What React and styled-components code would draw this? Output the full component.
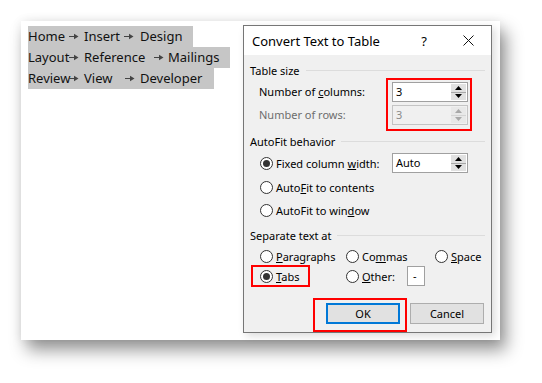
import React from "react";
import styled, { createGlobalStyle } from "styled-components";

const Global = createGlobalStyle`
  html, body { margin: 0; padding: 0; background: #ffffff; }
  body { width: 542px; height: 383px; overflow: hidden; font-family: "Noto Sans", "Open Sans", sans-serif; }
`;

const Page = styled.div`
  padding: 21px;
`;

const Card = styled.div`
  width: 479px;
  height: 319px;
  box-sizing: border-box;
  background: #ffffff;
  box-shadow: 6px 10px 16px rgba(0, 0, 0, 0.42), 0 0 10px rgba(0, 0, 0, 0.07);
  display: flex;
  justify-content: space-between;
  align-items: flex-start;
  padding: 4px 8px 0 7px;
`;

const TextBlock = styled.div`
  margin-top: 1px;
  display: flex;
  flex-direction: column;
  align-items: flex-start;
  font-family: "Noto Sans", sans-serif;
  font-size: 13px;
  color: #111;
`;

const Line = styled.div`
  display: flex;
  height: 21px;
  line-height: 21px;
  background: #c6c6c6;
`;

const Cell = styled.span`
  width: ${(p) => p.$w}px;
  white-space: nowrap;
  flex: none;
`;

const Arrow = styled.span`
  width: ${(p) => p.$w}px;
  flex: none;
  display: flex;
  align-items: center;
  padding-left: ${(p) => p.$pad || 0}px;
  box-sizing: border-box;
`;

const Dialog = styled.div`
  width: 249px;
  height: 308px;
  box-sizing: border-box;
  border: 1px solid #767676;
  background: #f0f0f0;
  box-shadow: 3px 3px 8px rgba(0, 0, 0, 0.14);
  display: flex;
  flex-direction: column;
  font-family: "Noto Sans", sans-serif;
  font-size: 11px;
  color: #000;
`;

const TitleBar = styled.div`
  height: 29px;
  background: #ffffff;
  display: flex;
  align-items: center;
  padding: 0 0 0 8px;
`;

const Title = styled.div`
  flex: 1;
  font-size: 13px;
  color: #000;
`;

const Help = styled.div`
  width: 14px;
  font-size: 13px;
  margin-right: 31px;
  text-align: center;
`;

const Close = styled.div`
  width: 12px;
  height: 12px;
  margin-right: 17px;
  display: flex;
  align-items: center;
  justify-content: center;
`;

const Body = styled.div`
  padding: 0 6px;
  display: flex;
  flex-direction: column;
`;

const Header = styled.div`
  height: 16px;
  margin-top: ${(p) => p.$mt}px;
  display: flex;
  align-items: center;
  gap: 6px;
  &::after {
    content: "";
    flex: 1;
    height: 1px;
    background: #dcdcdc;
  }
`;

const SizeGrid = styled.div`
  display: grid;
  grid-template-columns: 1fr 86px;
  margin-right: 13px;
`;

const SizeLabels = styled.div`
  display: flex;
  flex-direction: column;
  padding: 4px 0 0 9px;
  gap: 3px;
`;

const SizeLabel = styled.div`
  height: 20px;
  line-height: 20px;
  color: ${(p) => (p.$disabled ? "#6d6d6d" : "#000")};
`;

const RedBox = styled.div`
  border: 2px solid #ff0000;
  box-sizing: border-box;
`;

const InputStack = styled(RedBox)`
  display: flex;
  flex-direction: column;
  gap: 3px;
  padding: 2px 2px 4px 4px;
`;

const SpinInput = styled.div`
  width: 76px;
  height: 20px;
  box-sizing: border-box;
  border: 1px solid ${(p) => (p.$disabled ? "#c4c4c4" : "#a0a0a0")};
  background: ${(p) => (p.$disabled ? "#f0f0f0" : "#ffffff")};
  color: ${(p) => (p.$disabled ? "#8a8a8a" : "#000")};
  display: flex;
  align-items: stretch;
  margin-right: ${(p) => p.$mr || 0}px;
`;

const Value = styled.div`
  flex: 1;
  padding-left: 3px;
  line-height: 18px;
`;

const Spin = styled.div`
  width: 15px;
  margin: 1px 1px 1px 0;
  display: flex;
  flex-direction: column;
  gap: 1px;
  background: ${(p) => (p.$disabled ? "#d4d4d4" : "#a8a8a8")};
`;

const SpinBtn = styled.div`
  flex: 1;
  background: ${(p) => (p.$disabled ? "#e8e8e8" : "#e1e1e1")};
  display: flex;
  align-items: center;
  justify-content: center;
`;

const Row = styled.div`
  height: ${(p) => p.$h || 20}px;
  margin-top: ${(p) => p.$mt || 0}px;
  display: flex;
  align-items: center;
  padding-left: 10px;
`;

const RadioItem = styled.div`
  display: flex;
  align-items: center;
  gap: 3px;
  flex: ${(p) => (p.$grow ? 1 : "none")};
`;

const Circle = styled.span`
  width: 13px;
  height: 13px;
  box-sizing: border-box;
  border-radius: 50%;
  border: 1px solid #333;
  background: #fff;
  display: flex;
  align-items: center;
  justify-content: center;
  flex: none;
  &::after {
    content: "";
    width: 7px;
    height: 7px;
    border-radius: 50%;
    background: ${(p) => (p.$on ? "#333" : "transparent")};
  }
`;

const SepGrid = styled.div`
  display: grid;
  grid-template-columns: 86px 89px 1fr;
  grid-template-rows: 18px 22px;
  margin-top: 4px;
  padding-left: 1px;
`;

const SepCell = styled.div`
  display: flex;
  align-items: center;
  padding-left: 9px;
`;

const TabsBox = styled(RedBox)`
  width: 59px;
  height: 22px;
  display: flex;
  align-items: center;
  padding-left: 7px;
`;

const OtherInput = styled.div`
  width: 18px;
  height: 20px;
  box-sizing: border-box;
  border: 1px solid #a0a0a0;
  background: #fff;
  margin-left: 12px;
  padding-left: 5px;
  line-height: 18px;
`;

const ButtonRow = styled.div`
  margin-top: 11px;
  display: flex;
  justify-content: flex-end;
  align-items: flex-start;
  margin-right: 1px;
`;

const OkBox = styled(RedBox)`
  padding: 3px 5px 6px 11px;
`;

const Button = styled.div`
  width: 74px;
  height: 21px;
  box-sizing: border-box;
  border: ${(p) => (p.$primary ? "2px solid #0078d7" : "1px solid #adadad")};
  background: #e1e1e1;
  display: flex;
  align-items: center;
  justify-content: center;
  margin-top: ${(p) => p.$mt || 0}px;
  margin-left: ${(p) => p.$ml || 0}px;
`;

const lines = [
  [["Home", 40], ["→", 16, 1], ["Insert", 38], ["→", 18, 2], ["Design", 53]],
  [["Layout", 41], ["→", 15, 0], ["Reference", 66], ["→", 18, 4], ["Mailings", 62]],
  [["Review", 41], ["→", 15, 0], ["View", 39], ["→", 17, 2], ["Developer", 74]],
];

const ArrowIcon = () => (
  <svg width="10" height="7" viewBox="0 0 10 7">
    <line x1="0" y1="3.5" x2="6" y2="3.5" stroke="#444" strokeWidth="1" />
    <polygon points="5,0.8 9.5,3.5 5,6.2" fill="#444" />
  </svg>
);

const Tri = ({ up, disabled }) => (
  <svg width="7" height="4" viewBox="0 0 7 4">
    <polygon
      points={up ? "0,4 7,4 3.5,0" : "0,0 7,0 3.5,4"}
      fill={disabled ? "#a8a8a8" : "#000"}
    />
  </svg>
);

const Spinner = ({ value, disabled, mr }) => (
  <SpinInput $disabled={disabled} $mr={mr}>
    <Value>{value}</Value>
    <Spin $disabled={disabled}>
      <SpinBtn $disabled={disabled}>
        <Tri up disabled={disabled} />
      </SpinBtn>
      <SpinBtn $disabled={disabled}>
        <Tri disabled={disabled} />
      </SpinBtn>
    </Spin>
  </SpinInput>
);

export default function App() {
  return (
    <>
      <Global />
      <Page>
        <Card>
          <TextBlock>
            {lines.map((ln, i) => (
              <Line key={i}>
                {ln.map(([t, w, pad], j) =>
                  t === "→" ? (
                    <Arrow key={j} $w={w} $pad={pad} aria-label="→">
                      <ArrowIcon />
                    </Arrow>
                  ) : (
                    <Cell key={j} $w={w}>
                      {t}
                    </Cell>
                  )
                )}
              </Line>
            ))}
          </TextBlock>

          <Dialog>
            <TitleBar>
              <Title>Convert Text to Table</Title>
              <Help>?</Help>
              <Close>
                <svg width="11" height="11" viewBox="0 0 11 11">
                  <line x1="0.5" y1="0.5" x2="10.5" y2="10.5" stroke="#111" strokeWidth="1" />
                  <line x1="10.5" y1="0.5" x2="0.5" y2="10.5" stroke="#111" strokeWidth="1" />
                </svg>
              </Close>
            </TitleBar>
            <Body>
              <Header $mt={7}>Table size</Header>
              <SizeGrid>
                <SizeLabels>
                  <SizeLabel>
                    Number of <u>c</u>olumns:
                  </SizeLabel>
                  <SizeLabel $disabled>Number of rows:</SizeLabel>
                </SizeLabels>
                <InputStack>
                  <Spinner value="3" />
                  <Spinner value="3" disabled />
                </InputStack>
              </SizeGrid>

              <Header $mt={2}>AutoFit behavior</Header>
              <Row $mt={4}>
                <RadioItem $grow>
                  <Circle $on />
                  <span>
                    Fixed column <u>w</u>idth:
                  </span>
                </RadioItem>
                <Spinner value="Auto" mr={17} />
              </Row>
              <Row $mt={4}>
                <RadioItem>
                  <Circle />
                  <span>
                    Auto<u>F</u>it to contents
                  </span>
                </RadioItem>
              </Row>
              <Row $mt={3}>
                <RadioItem>
                  <Circle />
                  <span>
                    AutoFit to win<u>d</u>ow
                  </span>
                </RadioItem>
              </Row>

              <Header $mt={7}>Separate text at</Header>
              <SepGrid>
                <SepCell>
                  <RadioItem>
                    <Circle />
                    <span>
                      <u>P</u>aragraphs
                    </span>
                  </RadioItem>
                </SepCell>
                <SepCell>
                  <RadioItem>
                    <Circle />
                    <span>
                      Co<u>m</u>mas
                    </span>
                  </RadioItem>
                </SepCell>
                <SepCell>
                  <RadioItem>
                    <Circle />
                    <span>
                      <u>S</u>pace
                    </span>
                  </RadioItem>
                </SepCell>
                <div>
                  <TabsBox>
                    <RadioItem>
                      <Circle $on />
                      <span>
                        <u>T</u>abs
                      </span>
                    </RadioItem>
                  </TabsBox>
                </div>
                <SepCell>
                  <RadioItem>
                    <Circle />
                    <span>
                      <u>O</u>ther:
                    </span>
                  </RadioItem>
                  <OtherInput>-</OtherInput>
                </SepCell>
                <div />
              </SepGrid>

              <ButtonRow>
                <OkBox>
                  <Button $primary>OK</Button>
                </OkBox>
                <Button $mt={5} $ml={3}>
                  Cancel
                </Button>
              </ButtonRow>
            </Body>
          </Dialog>
        </Card>
      </Page>
    </>
  );
}
